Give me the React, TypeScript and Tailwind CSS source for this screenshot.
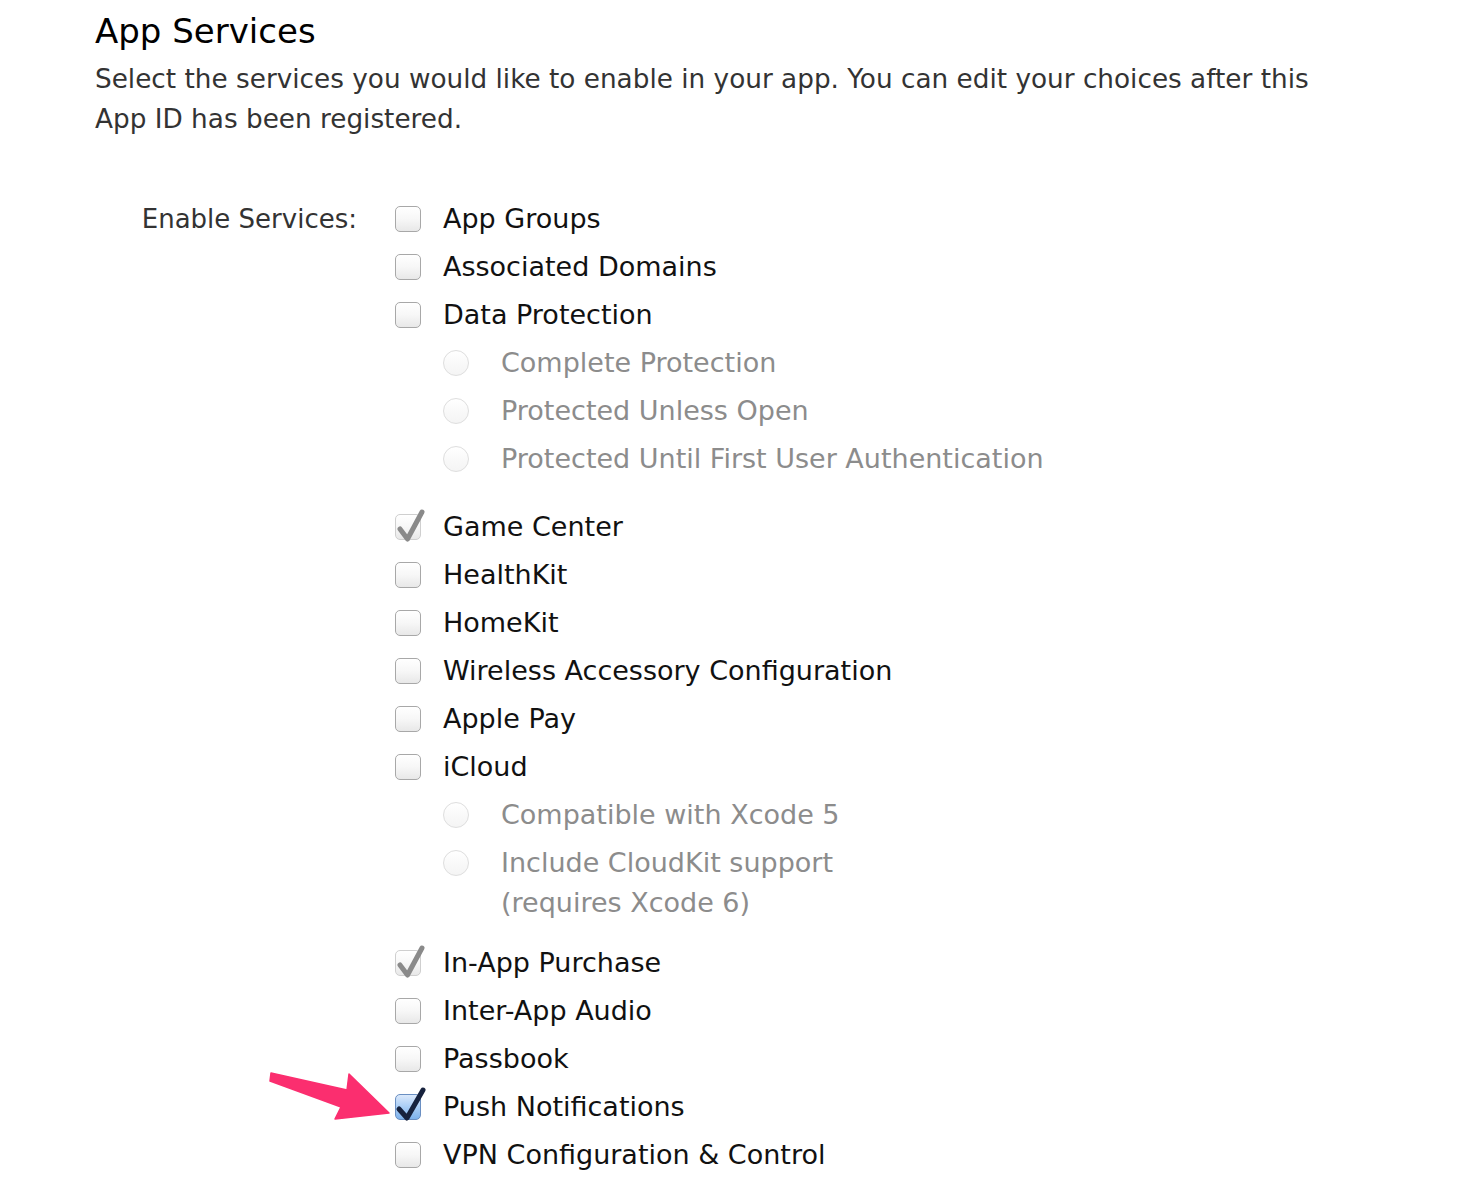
import React from "react";

type Item =
  | { kind: "check"; label: string; state?: "off" | "dim" | "on"; gapTop?: number }
  | { kind: "radio"; label: string; lines?: string[] };

const items: Item[] = [
  { kind: "check", label: "App Groups" },
  { kind: "check", label: "Associated Domains" },
  { kind: "check", label: "Data Protection" },
  { kind: "radio", label: "Complete Protection" },
  { kind: "radio", label: "Protected Unless Open" },
  { kind: "radio", label: "Protected Until First User Authentication" },
  { kind: "check", label: "Game Center", state: "dim", gapTop: 20 },
  { kind: "check", label: "HealthKit" },
  { kind: "check", label: "HomeKit" },
  { kind: "check", label: "Wireless Accessory Configuration" },
  { kind: "check", label: "Apple Pay" },
  { kind: "check", label: "iCloud" },
  { kind: "radio", label: "Compatible with Xcode 5" },
  { kind: "radio", label: "Include CloudKit support", lines: ["Include CloudKit support", "(requires Xcode 6)"] },
  { kind: "check", label: "In-App Purchase", state: "dim", gapTop: 12 },
  { kind: "check", label: "Inter-App Audio" },
  { kind: "check", label: "Passbook" },
  { kind: "check", label: "Push Notifications", state: "on" },
  { kind: "check", label: "VPN Configuration & Control" },
];

function Checkbox({ state = "off" }: { state?: "off" | "dim" | "on" }) {
  if (state === "on") {
    return (
      <div className="relative w-[26px] h-[26px] shrink-0 rounded-[5px] border border-[#6a8fc2] bg-gradient-to-b from-[#dbe9fb] via-[#a9cdf5] to-[#7db2ec]">
        <svg className="absolute left-0 top-0 overflow-visible" width="26" height="26" viewBox="0 0 26 26">
          <path d="M3 14 L11 23 L27 -5" fill="none" stroke="#17223d" strokeWidth="5" strokeLinecap="round" strokeLinejoin="round" />
        </svg>
      </div>
    );
  }
  return (
    <div
      className={`relative w-[26px] h-[26px] shrink-0 rounded-[5px] border bg-gradient-to-b from-[#ffffff] via-[#f7f7f7] to-[#e8e8e8] ${
        state === "dim" ? "border-[#cfcfcf]" : "border-[#a8a8a8]"
      }`}
    >
      {state === "dim" && (
        <svg className="absolute left-0 top-0 overflow-visible" width="26" height="26" viewBox="0 0 26 26">
          <path d="M4 14 L11.5 24 L26 -3" fill="none" stroke="#8a8a8a" strokeWidth="5" strokeLinecap="round" strokeLinejoin="round" />
        </svg>
      )}
    </div>
  );
}

function Radio() {
  return <div className="w-[26px] h-[26px] shrink-0 rounded-full border border-[#dedede] bg-gradient-to-b from-[#ffffff] to-[#f4f4f4]" />;
}

export default function App() {
  return (
    <div
      className="relative min-h-[1198px] bg-white pl-[95px] pt-[9px]"
      style={{ fontFamily: '"DejaVu Sans", "Liberation Sans", sans-serif' }}
    >
      <h1 className="text-[34px] leading-[44px] text-black">App Services</h1>
      <p className="mt-[6px] w-[1240px] text-[26.3px] leading-[40px] text-[#333]">
        Select the services you would like to enable in your app. You can edit your choices after this
        <br />
        App ID has been registered.
      </p>

      <div className="mt-[56px] flex">
        <div className="w-[262px] h-12 flex items-center justify-end text-[26px] text-[#333]">Enable Services:</div>
        <div className="ml-[38px] flex flex-col">
          {items.map((it, i) =>
            it.kind === "check" ? (
              <div key={i} className="flex items-center h-12 gap-[22px]" style={{ marginTop: it.gapTop ?? 0 }}>
                <Checkbox state={it.state} />
                <span className="text-[27px] leading-[40px] text-[#111]">{it.label}</span>
              </div>
            ) : (
              <div key={i} className="flex items-start py-1 pl-[48px] gap-[32px]">
                <div className="h-[40px] flex items-center">
                  <Radio />
                </div>
                <span className="text-[27px] leading-[40px] text-[#8c8c8c]">
                  {(it.lines ?? [it.label]).map((l, j) => (
                    <React.Fragment key={j}>
                      {j > 0 && <br />}
                      {l}
                    </React.Fragment>
                  ))}
                </span>
              </div>
            )
          )}
        </div>
      </div>

      {/* pink pointer arrow */}
      <svg className="absolute left-[265px] top-[1065px]" width="130" height="60" viewBox="265 1065 130 60">
        <polygon
          points="271,1073 347,1090 349,1074 389,1113 335,1119 341,1107 270,1081"
          fill="#fb2e6f"
          stroke="#fb2e6f"
          strokeWidth="1.5"
          strokeLinejoin="round"
        />
      </svg>
    </div>
  );
}
